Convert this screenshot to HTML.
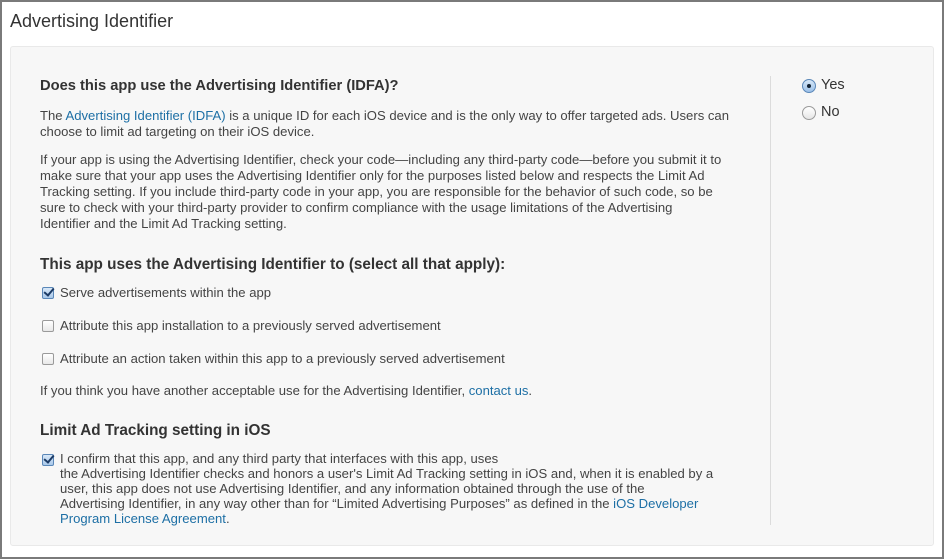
<!DOCTYPE html>
<html><head><style>
body{margin:0;width:944px;height:559px;background:#fff;font-family:"Liberation Sans",sans-serif;color:#333;position:relative;overflow:hidden}
.frame{position:absolute;left:0;top:0;width:940px;height:555px;border:2px solid #7a7a7a}
.t{position:absolute;white-space:nowrap;font-size:13.1px;color:#444}
h1{position:absolute;left:10px;top:11px;margin:0;font-size:18px;font-weight:normal;color:#333}
h2{position:absolute;margin:0;font-size:15.3px;font-weight:bold;color:#333;white-space:nowrap}
a{color:#1d6fa5;text-decoration:none}
.panel{position:absolute;left:10px;top:46px;width:922px;height:498px;background:#f7f7f7;border:1px solid #e9e9e9;border-radius:3px}
.div{position:absolute;left:770px;top:76px;width:1px;height:449px;background:#dcdcdc}
.cb{position:absolute;width:10px;height:10px;border:1px solid #9a9a9a;border-radius:2px;background:linear-gradient(#fff,#e8e8e8)}
.cb.on{border-color:#5a87b8;background:linear-gradient(#d8e8f8,#a9c8ea)}
.cb.on::after{content:"";position:absolute;left:3px;top:-2px;width:4px;height:8px;border:solid #1c3b66;border-width:0 2px 2px 0;transform:rotate(40deg)}
.rd{position:absolute;width:12px;height:12px;border:1px solid #9a9a9a;border-radius:50%;background:linear-gradient(#fff,#e6e6e6)}
.rd.on{border-color:#5a87b8;background:linear-gradient(#d8e8f8,#9cc0e8)}
.rd.on::after{content:"";position:absolute;left:4px;top:4px;width:4px;height:4px;border-radius:50%;background:#123}
</style></head><body>
<div class="frame"></div>
<h1>Advertising Identifier</h1>
<div class="panel"></div>
<div class="div"></div>
<h2 style="left:40px;top:78px;font-size:14.7px">Does this app use the Advertising Identifier (IDFA)?</h2>
<div class="t" style="left:40px;top:108px">The <a>Advertising Identifier (IDFA)</a> is a unique ID for each iOS device and is the only way to offer targeted ads. Users can</div>
<div class="t" style="left:40px;top:124px">choose to limit ad targeting on their iOS device.</div>
<div class="t" style="left:40px;top:152px">If your app is using the Advertising Identifier, check your code—including any third-party code—before you submit it to</div>
<div class="t" style="left:40px;top:168px">make sure that your app uses the Advertising Identifier only for the purposes listed below and respects the Limit Ad</div>
<div class="t" style="left:40px;top:184px">Tracking setting. If you include third-party code in your app, you are responsible for the behavior of such code, so be</div>
<div class="t" style="left:40px;top:200px">sure to check with your third-party provider to confirm compliance with the usage limitations of the Advertising</div>
<div class="t" style="left:40px;top:216px">Identifier and the Limit Ad Tracking setting.</div>
<h2 style="left:40px;top:256px">This app uses the Advertising Identifier to (select all that apply):</h2>
<div class="cb on" style="left:42px;top:287px"></div>
<div class="t" style="left:60px;top:285px">Serve advertisements within the app</div>
<div class="cb" style="left:42px;top:320px"></div>
<div class="t" style="left:60px;top:318px">Attribute this app installation to a previously served advertisement</div>
<div class="cb" style="left:42px;top:353px"></div>
<div class="t" style="left:60px;top:351px">Attribute an action taken within this app to a previously served advertisement</div>
<div class="t" style="left:40px;top:383px">If you think you have another acceptable use for the Advertising Identifier, <a>contact us</a>.</div>
<h2 style="left:40px;top:422px">Limit Ad Tracking setting in iOS</h2>
<div class="cb on" style="left:42px;top:454px"></div>
<div class="t" style="left:60px;top:451px">I confirm that this app, and any third party that interfaces with this app, uses</div>
<div class="t" style="left:60px;top:466px">the Advertising Identifier checks and honors a user's Limit Ad Tracking setting in iOS and, when it is enabled by a</div>
<div class="t" style="left:60px;top:481px">user, this app does not use Advertising Identifier, and any information obtained through the use of the</div>
<div class="t" style="left:60px;top:496px">Advertising Identifier, in any way other than for “Limited Advertising Purposes” as defined in the <a>iOS Developer</a></div>
<div class="t" style="left:60px;top:511px"><a>Program License Agreement</a>.</div>
<div class="rd on" style="left:802px;top:79px"></div>
<div class="t" style="left:821px;top:77px;font-size:14.5px;color:#333">Yes</div>
<div class="rd" style="left:802px;top:106px"></div>
<div class="t" style="left:821px;top:104px;font-size:14.5px;color:#333">No</div>
</body></html>
